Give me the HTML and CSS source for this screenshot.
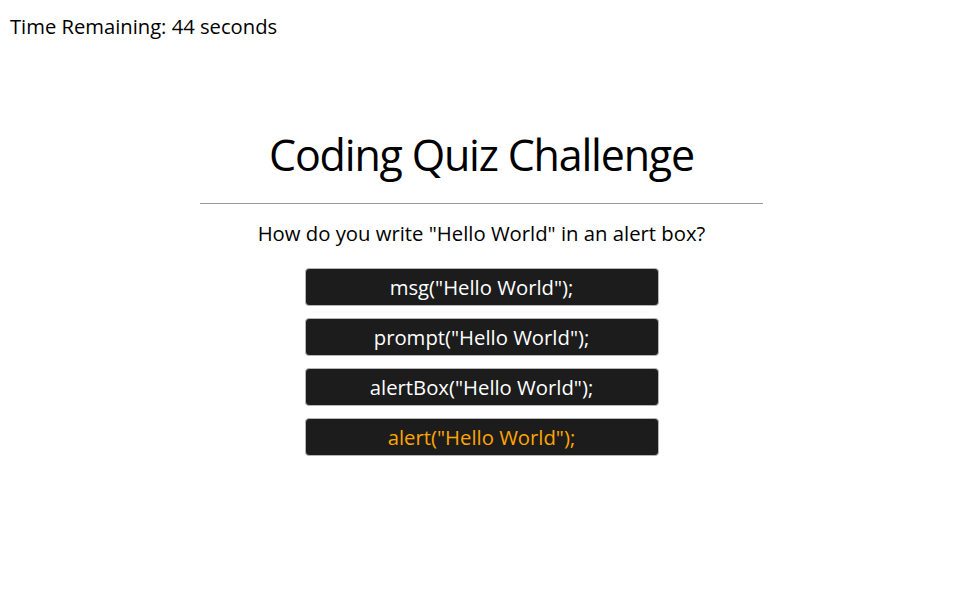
FILE: index.html
```html
<!DOCTYPE html>
<html>
<head>
<meta charset="utf-8">
<link rel="stylesheet" href="styles.css">
</head>
<body>
<header class="timer">Time Remaining: <span>44</span> seconds</header>
<main class="quiz">
  <h1 class="title">Coding Quiz Challenge</h1>
  <hr class="divider">
  <p class="question">How do you write "Hello World" in an alert box?</p>
  <div class="answers">
    <button class="answer">msg("Hello World");</button>
    <button class="answer">prompt("Hello World");</button>
    <button class="answer">alertBox("Hello World");</button>
    <button class="answer answer-hover">alert("Hello World");</button>
  </div>
</main>
</body>
</html>
```
FILE: styles.css
```css
html, body {
  margin: 0;
  padding: 0;
  background: #ffffff;
}
body {
  font-family: "Open Sans", sans-serif;
  color: #000;
}
.timer {
  padding: 13px 0 0 10px;
  font-size: 20.2px;
  line-height: 27px;
}
.quiz {
  display: flex;
  flex-direction: column;
  align-items: center;
  padding-left: 3px;
}
.title {
  margin: 85px 0 0;
  font-size: 43px;
  font-weight: 400;
  letter-spacing: -1.2px;
  line-height: 60px;
}
.divider {
  width: 563px;
  margin: 18px 0 0;
  border: 0;
  border-top: 1px solid #9a9a9a;
  height: 0;
}
.question {
  margin: 16px 0 0;
  font-size: 20.3px;
  line-height: 27px;
}
.answers {
  margin-top: 21px;
  display: flex;
  flex-direction: column;
  gap: 12px;
}
.answer {
  width: 354px;
  height: 38px;
  background: #1c1c1c;
  color: #ffffff;
  border: 1px solid #b5b5b5;
  border-radius: 4px;
  font-family: "Open Sans", sans-serif;
  font-size: 20.3px;
  padding: 0;
}
.answer-hover {
  color: #ffa500;
}
```
